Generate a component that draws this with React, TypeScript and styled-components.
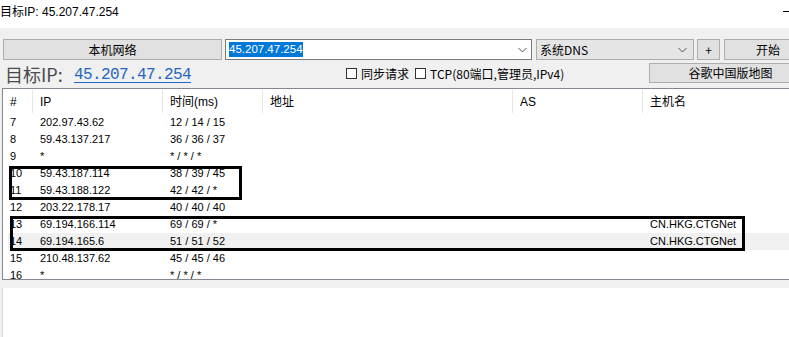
import React from 'react';
import styled, { createGlobalStyle } from 'styled-components';

const GlobalStyle = createGlobalStyle`
  html, body {
    margin: 0;
    padding: 0;
    overflow: hidden;
    background: #ffffff;
  }
  body {
    font-family: "Liberation Sans", "Noto Sans CJK SC", sans-serif;
    color: #000;
  }
`;

const UI_FONT = `"Noto Sans CJK SC", "Liberation Sans", sans-serif`;
const COLS = '30px 130px 100px 250px 130px 1fr';

interface IHop {
  n: number;
  ip: string;
  time: string;
  host?: string;
  hover?: boolean;
}

const hops: IHop[] = [
  { n: 7, ip: '202.97.43.62', time: '12 / 14 / 15' },
  { n: 8, ip: '59.43.137.217', time: '36 / 36 / 37' },
  { n: 9, ip: '*', time: '* / * / *' },
  { n: 10, ip: '59.43.187.114', time: '38 / 39 / 45' },
  { n: 11, ip: '59.43.188.122', time: '42 / 42 / *' },
  { n: 12, ip: '203.22.178.17', time: '40 / 40 / 40' },
  { n: 13, ip: '69.194.166.114', time: '69 / 69 / *', host: 'CN.HKG.CTGNet' },
  { n: 14, ip: '69.194.165.6', time: '51 / 51 / 52', host: 'CN.HKG.CTGNet', hover: true },
  { n: 15, ip: '210.48.137.62', time: '45 / 45 / 46' },
  { n: 16, ip: '*', time: '* / * / *' },
];

const Window = styled.div`
  position: relative;
  width: 812px;
  height: 337px;
  display: flex;
  flex-direction: column;
  background: #f0f0f0;
`;

const TitleBar = styled.div`
  height: 28px;
  flex-shrink: 0;
  display: flex;
  align-items: flex-start;
  background: #ffffff;
  font-size: 12px;
  line-height: 17px;
  padding-top: 4px;
  box-sizing: border-box;
`;

const MinimizeDash = styled.div`
  width: 10px;
  height: 1px;
  background: #000;
  margin: 7px 19px 0 auto;
`;

const ToolRow = styled.div`
  display: flex;
  gap: 3px;
  height: 21px;
  margin: 11px 0 0 3px;
`;

const Button = styled.div<{ $w: number; $h?: number }>`
  width: ${p => p.$w}px;
  height: ${p => p.$h ?? 21}px;
  flex-shrink: 0;
  box-sizing: border-box;
  border: 1px solid #adadad;
  background: #e1e1e1;
  display: flex;
  align-items: center;
  justify-content: center;
  font-family: ${UI_FONT};
  font-size: 12px;
  line-height: 14px;
  color: #000;
`;

const Combo = styled.div<{ $w: number; $editable?: boolean }>`
  width: ${p => p.$w}px;
  height: 21px;
  flex-shrink: 0;
  box-sizing: border-box;
  border: 1px solid ${p => (p.$editable ? '#7a7a7a' : '#acacac')};
  background: ${p => (p.$editable ? '#ffffff' : '#e5e5e5')};
  display: flex;
  align-items: center;
  padding: 0 ${p => (p.$editable ? 4 : 6)}px 0 3px;
  font-family: ${UI_FONT};
  font-size: 12px;
  line-height: 15px;
`;

const Selected = styled.span`
  background: #0078d7;
  color: #fff;
  font-family: "Liberation Sans", sans-serif;
  font-size: 11.5px;
  line-height: 15px;
`;

const ComboText = styled.span`
  flex: 1;
`;

const Chevron = () => (
  <svg width="9" height="6" viewBox="0 0 9 6" style={{ marginLeft: 'auto' }}>
    <polyline points="0.5,1 4.5,5 8.5,1" fill="none" stroke="#555" strokeWidth="1" />
  </svg>
);

const InfoRow = styled.div`
  display: flex;
  align-items: center;
  height: 28px;
  padding-left: 5px;
`;

const BigLabel = styled.span`
  width: 69px;
  flex-shrink: 0;
  white-space: nowrap;
  font-family: ${UI_FONT};
  font-size: 18px;
  line-height: 22px;
  color: #4a4a4a;
`;

const IpLink = styled.span`
  font-family: "Liberation Mono", monospace;
  font-size: 16px;
  letter-spacing: -0.6px;
  line-height: 20px;
  color: #2467c4;
  text-decoration: underline;
  text-underline-offset: 3px;
  margin-top: 1px;
  white-space: nowrap;
`;

const Check = styled.label<{ $ml: number }>`
  display: flex;
  align-items: center;
  gap: 4px;
  margin-left: ${p => p.$ml}px;
  font-family: ${UI_FONT};
  font-size: 12px;
  line-height: 14px;
  margin-top: -1px;
  white-space: nowrap;
`;

const Box = styled.span`
  width: 11px;
  height: 11px;
  box-sizing: border-box;
  border: 1px solid #333;
  background: #fff;
  flex-shrink: 0;
`;

const MapButton = styled(Button)`
  margin-left: auto;
  margin-top: -2px;
`;

const Table = styled.div`
  margin-left: 2px;
  height: 192px;
  flex-shrink: 0;
  box-sizing: border-box;
  border: 1px solid #828790;
  border-right: none;
  background: #fff;
  overflow: hidden;
`;

const HeaderRow = styled.div`
  display: grid;
  grid-template-columns: ${COLS};
  height: 25px;
`;

const HeaderCell = styled.div`
  display: flex;
  align-items: center;
  padding-left: 7px;
  margin: 1px 0 1px;
  border-right: 1px solid #e5e5e5;
  font-family: "Liberation Sans", "Noto Sans CJK SC", sans-serif;
  font-size: 12px;
  line-height: 14px;
  &:last-child {
    border-right: none;
  }
`;

const Row = styled.div<{ $hover?: boolean }>`
  display: grid;
  grid-template-columns: 25px 130px 100px 250px 130px 1fr;
  margin-left: 5px;
  height: 17px;
  align-items: center;
  font-size: 11px;
  line-height: 17px;
  background: ${p => (p.$hover ? '#f0f0f0' : 'transparent')};
`;

const Cell = styled.div<{ $pl?: number }>`
  padding-left: ${p => p.$pl ?? 7}px;
  white-space: nowrap;
`;

const Strip = styled.div`
  height: 8px;
  flex-shrink: 0;
`;

const BottomPanel = styled.div`
  flex: 1;
  margin-left: 2px;
  background: #fff;
  border-left: 1px solid #dadada;
`;

const Marker = styled.div<{ $x: number; $y: number; $w: number; $h: number }>`
  position: absolute;
  left: ${p => p.$x}px;
  top: ${p => p.$y}px;
  width: ${p => p.$w}px;
  height: ${p => p.$h}px;
  box-sizing: border-box;
  border: 3px solid #000;
  pointer-events: none;
`;

export default function App() {
  return (
    <>
      <GlobalStyle />
      <Window>
        <TitleBar>
          目标IP: 45.207.47.254
          <MinimizeDash />
        </TitleBar>

        <ToolRow>
          <Button $w={219}>本机网络</Button>
          <Combo $w={307} $editable>
            <Selected>45.207.47.254</Selected>
            <Chevron />
          </Combo>
          <Combo $w={158} style={{ marginLeft: 1 }}>
            <ComboText>系统DNS</ComboText>
            <Chevron />
          </Combo>
          <Button $w={23}>+</Button>
          <Button $w={88} style={{ marginLeft: 1 }}>开始</Button>
        </ToolRow>

        <InfoRow>
          <BigLabel>目标IP:</BigLabel>
          <IpLink>45.207.47.254</IpLink>
          <Check $ml={155}>
            <Box />
            同步请求
          </Check>
          <Check $ml={6}>
            <Box />
            TCP(80端口,管理员,IPv4)
          </Check>
          <MapButton $w={163} $h={20}>谷歌中国版地图</MapButton>
        </InfoRow>

        <Table>
          <HeaderRow>
            <HeaderCell>#</HeaderCell>
            <HeaderCell>IP</HeaderCell>
            <HeaderCell>时间(ms)</HeaderCell>
            <HeaderCell>地址</HeaderCell>
            <HeaderCell>AS</HeaderCell>
            <HeaderCell>主机名</HeaderCell>
          </HeaderRow>
          {hops.map(h => (
            <Row key={h.n} $hover={h.hover}>
              <Cell $pl={2}>{h.n}</Cell>
              <Cell>{h.ip}</Cell>
              <Cell>{h.time}</Cell>
              <Cell />
              <Cell />
              <Cell>{h.host ?? ''}</Cell>
            </Row>
          ))}
        </Table>
        <Strip />
        <BottomPanel />

        <Marker $x={9} $y={166} $w={233} $h={34} />
        <Marker $x={10} $y={216} $w={735} $h={35} />
      </Window>
    </>
  );
}
